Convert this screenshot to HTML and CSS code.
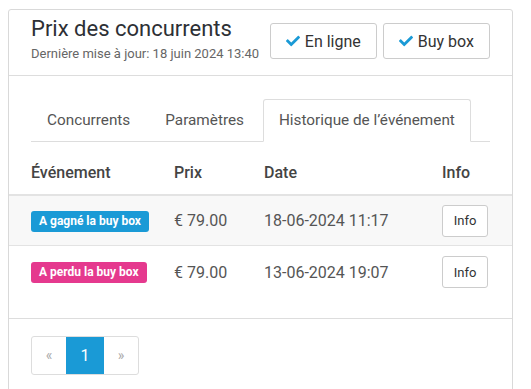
FILE: index.html
```html
<!DOCTYPE html>
<html lang="fr">
<head>
    <meta charset="UTF-8"/>
    <meta name="viewport" content="width=device-width, initial-scale=1"/>
    <title>Prix des concurrents</title>
    <link rel="stylesheet" href="styles.css">
</head>
<body>

<div class="panel">
    <!-- Header -->
    <div class="panel-heading">
        <div class="heading-text">
            <h1>Prix des concurrents</h1>
            <p class="updated">Dernière mise à jour: 18 juin 2024 13:40</p>
        </div>
        <div class="heading-buttons">
            <button class="btn">
                <svg class="check" viewBox="0 0 512 512"><path d="M173.9 439.4l-166.4-166.4c-10-10-10-26.2 0-36.2l36.2-36.2c10-10 26.2-10 36.2 0L192 312.7 432.1 72.6c10-10 26.2-10 36.2 0l36.2 36.2c10 10 10 26.2 0 36.2l-294.4 294.4c-10 10-26.2 10-36.2 0z"/></svg>
                En ligne
            </button>
            <button class="btn">
                <svg class="check" viewBox="0 0 512 512"><path d="M173.9 439.4l-166.4-166.4c-10-10-10-26.2 0-36.2l36.2-36.2c10-10 26.2-10 36.2 0L192 312.7 432.1 72.6c10-10 26.2-10 36.2 0l36.2 36.2c10 10 10 26.2 0 36.2l-294.4 294.4c-10 10-26.2 10-36.2 0z"/></svg>
                Buy box
            </button>
        </div>
    </div>

    <!-- Tabs -->
    <div class="panel-body">
        <ul class="nav-tabs">
            <li>Concurrents</li>
            <li>Paramètres</li>
            <li class="active">Historique de l’événement</li>
        </ul>
    </div>

    <!-- Event table -->
    <table class="events">
        <colgroup>
            <col class="col-event">
            <col class="col-price">
            <col class="col-date">
            <col>
        </colgroup>
        <thead>
        <tr>
            <th>Événement</th>
            <th>Prix</th>
            <th>Date</th>
            <th>Info</th>
        </tr>
        </thead>
        <tbody>
        <tr class="striped">
            <td><span class="label label-won">A gagné la buy box</span></td>
            <td>€ 79.00</td>
            <td>18-06-2024 11:17</td>
            <td><button class="btn btn-sm">Info</button></td>
        </tr>
        <tr>
            <td><span class="label label-lost">A perdu la buy box</span></td>
            <td>€ 79.00</td>
            <td>13-06-2024 19:07</td>
            <td><button class="btn btn-sm">Info</button></td>
        </tr>
        </tbody>
    </table>

    <!-- Pagination -->
    <div class="panel-footer">
        <ul class="pagination">
            <li class="arrow">«</li>
            <li class="active">1</li>
            <li class="arrow">»</li>
        </ul>
    </div>
</div>

</body>
</html>
```

FILE: styles.css
```css
body {
    margin: 8px;
    font-family: Roboto, "Liberation Sans", sans-serif;
    color: #555;
    background-color: #fff;
}

.panel {
    width: 505px;
    box-sizing: border-box;
    margin-top: 1px;
    border: 1px solid #d9d9d9;
    border-radius: 3px;
}

.panel-heading {
    display: flex;
    justify-content: space-between;
    padding: 6px 22px 13px;
    border-bottom: 1px solid #ddd;
}

h1 {
    margin: 0;
    font-size: 22px;
    font-weight: 400;
    line-height: 26px;
    color: #2d3035;
}

.updated {
    margin: 4px 0 0;
    font-size: 13px;
    line-height: 16px;
    color: #666;
}

.heading-buttons {
    display: flex;
    gap: 6px;
    margin-top: 7px;
}

.btn {
    font-family: Roboto, "Liberation Sans", sans-serif;
    background-color: #fff;
    border: 1px solid #ccc;
    border-radius: 3px;
    color: #333;
    cursor: pointer;
}

.heading-buttons .btn {
    display: flex;
    align-items: center;
    gap: 5px;
    height: 36px;
    padding: 0 15px;
    font-size: 16px;
}

.check {
    width: 14px;
    height: 14px;
    fill: #1a9ad6;
}

.panel-body {
    padding: 23px 22px 9px;
}

.nav-tabs {
    display: flex;
    margin: 0;
    padding: 0;
    list-style: none;
    border-bottom: 1px solid #ddd;
}

.nav-tabs li {
    margin-right: 3px;
    margin-bottom: -1px;
    padding: 0 15px;
    height: 41px;
    line-height: 41px;
    font-size: 15.3px;
    color: #555;
    border: 1px solid transparent;
    border-radius: 3px 3px 0 0;
}

.nav-tabs li.active {
    border-color: #ddd;
    border-bottom-color: #fff;
    background-color: #fff;
}

.events {
    width: 100%;
    border-collapse: collapse;
    table-layout: fixed;
}

.col-event {
    width: 143px;
}

.col-price {
    width: 90px;
}

.col-date {
    width: 178px;
}

.events th {
    height: 43px;
    padding: 0 0 0 22px;
    text-align: left;
    font-size: 16px;
    font-weight: 500;
    color: #444;
    border-bottom: 2px solid #e3e3e3;
}

.events td {
    height: 49px;
    padding: 0 0 0 22px;
    font-size: 16px;
    color: #555;
}

.events tbody tr + tr td {
    border-top: 1px solid #e3e3e3;
    height: 52px;
}

.events tr.striped td {
    background-color: #f8f8f8;
}

.label {
    display: inline-block;
    padding: 0 8px;
    height: 21px;
    line-height: 21px;
    font-size: 12px;
    font-weight: 700;
    color: #fff;
    border-radius: 3px;
}

.label-won {
    background-color: #1a9ad6;
}

.label-lost {
    background-color: #e5398e;
}

.btn-sm {
    width: 46px;
    height: 32px;
    padding: 0;
    font-size: 13px;
}

.panel-footer {
    margin-top: 20px;
    padding: 17px 22px;
    border-top: 1px solid #ddd;
}

.pagination {
    display: inline-flex;
    margin: 0;
    padding: 0;
    list-style: none;
    border: 1px solid #ddd;
    border-radius: 3px;
}

.pagination li {
    width: 34px;
    height: 37px;
    line-height: 37px;
    text-align: center;
    font-size: 16px;
}

.pagination li.arrow {
    color: #aaa;
    font-size: 14px;
}

.pagination li.active {
    width: 38px;
    background-color: #1a9ad6;
    color: #fff;
}
```
